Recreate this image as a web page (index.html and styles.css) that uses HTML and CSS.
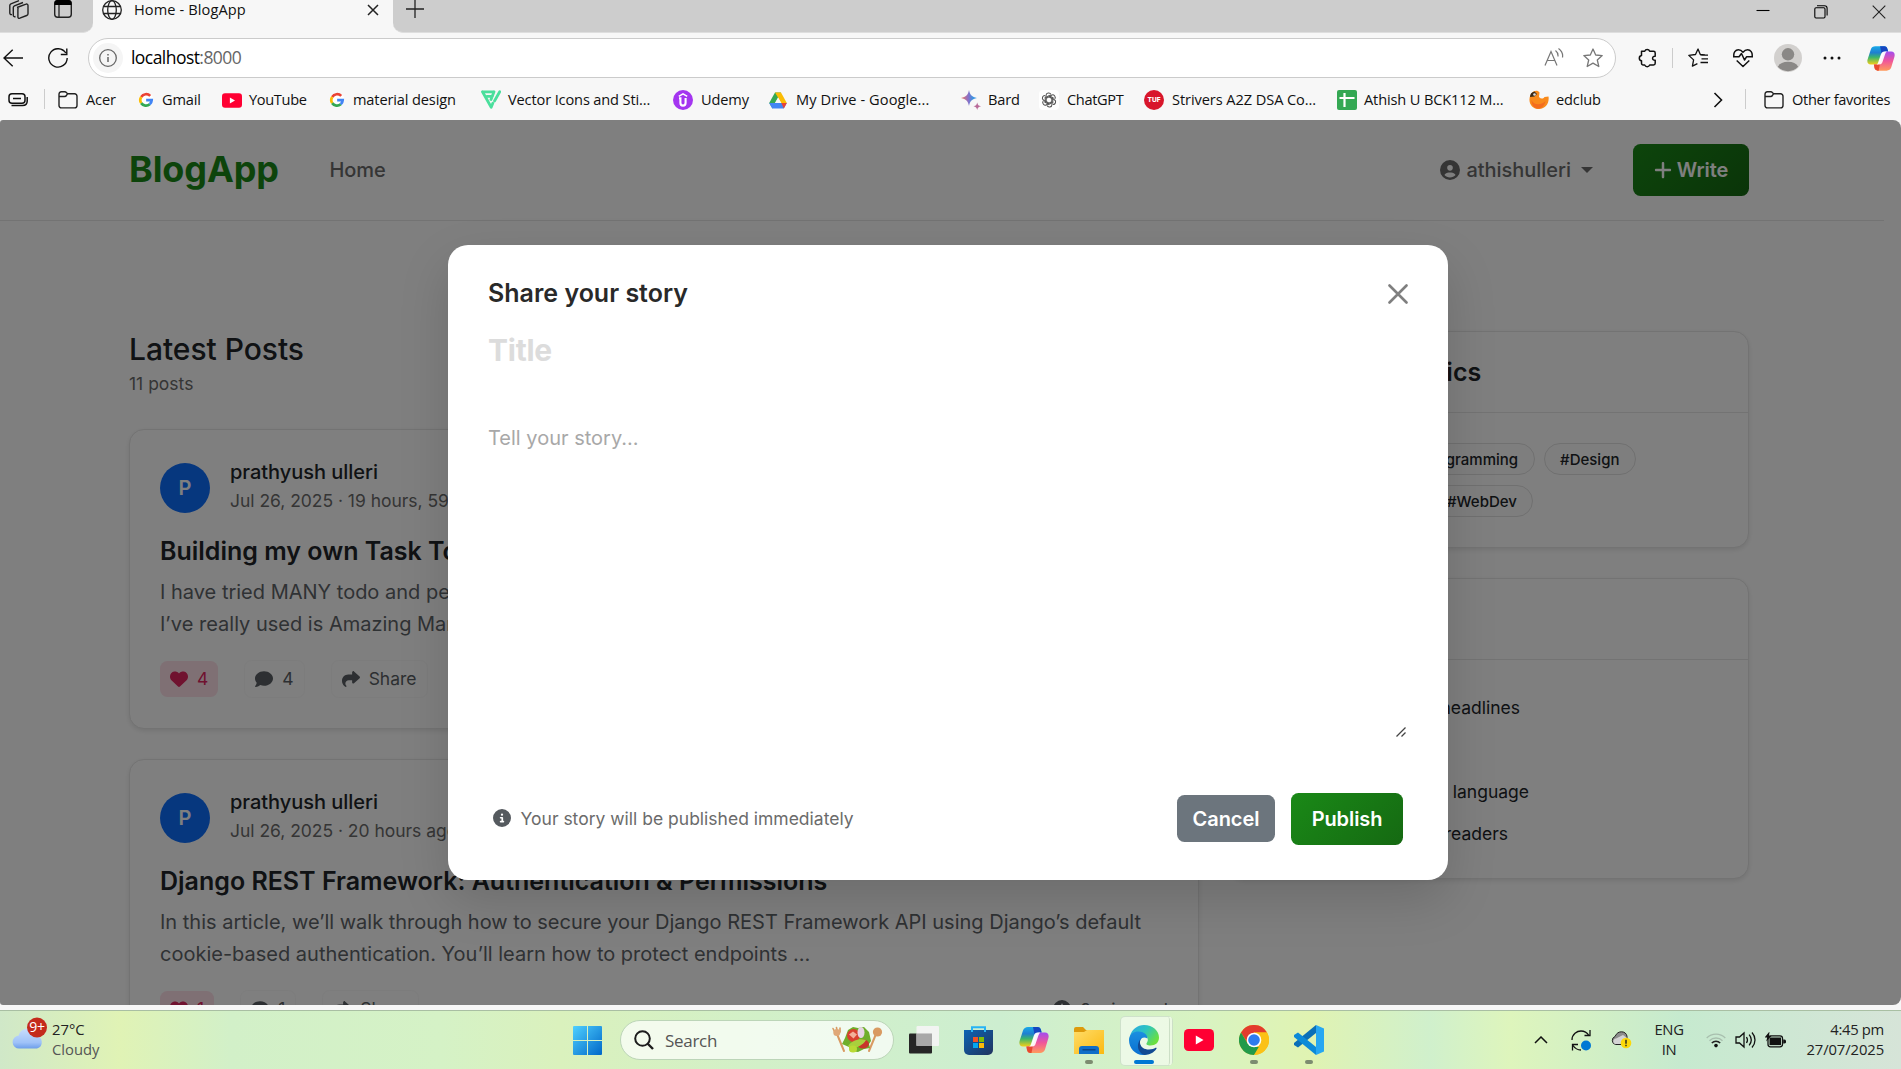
FILE: index.html
```html
<!DOCTYPE html>
<html lang="en">
<head>
<meta charset="utf-8">
<title>Home - BlogApp</title>
<link rel="stylesheet" href="styles.css">
</head>
<body>
<svg class="defs" aria-hidden="true">
  <defs>
    <linearGradient id="cpA" x1="0" y1="0" x2="0" y2="1"><stop offset="0" stop-color="#19a9e8"/><stop offset=".35" stop-color="#1f7fd0"/><stop offset=".6" stop-color="#3bb56b"/><stop offset="1" stop-color="#f5cf17"/></linearGradient>
    <linearGradient id="cpB" x1="0" y1="0" x2="0" y2="1"><stop offset="0" stop-color="#a24cf0"/><stop offset=".5" stop-color="#f0569a"/><stop offset="1" stop-color="#ff9a5c"/></linearGradient>
    <linearGradient id="win" x1="0" y1="0" x2="1" y2="1"><stop offset="0" stop-color="#4fd0ff"/><stop offset="1" stop-color="#0067c8"/></linearGradient>
    <linearGradient id="edA" x1="0" y1="0" x2="1" y2=".6"><stop offset="0" stop-color="#2aa5e8"/><stop offset=".5" stop-color="#2cc4c0"/><stop offset="1" stop-color="#6be03e"/></linearGradient>
    <linearGradient id="edB" x1="0" y1="0" x2="0" y2="1"><stop offset="0" stop-color="#1b8fe0"/><stop offset="1" stop-color="#0a6fd0"/></linearGradient>
    <linearGradient id="bard" x1="0" y1="0" x2="1" y2="0"><stop offset="0" stop-color="#f0745c"/><stop offset=".45" stop-color="#8a70c8"/><stop offset=".75" stop-color="#3b93e0"/><stop offset="1" stop-color="#4aa0ea"/></linearGradient>
    <linearGradient id="store" x1="0" y1="0" x2="1" y2="1"><stop offset="0" stop-color="#0c63b4"/><stop offset="1" stop-color="#22345e"/></linearGradient>
    <linearGradient id="fold" x1="0" y1="0" x2="1" y2="1"><stop offset="0" stop-color="#ffdc68"/><stop offset="1" stop-color="#fbb911"/></linearGradient>
    <linearGradient id="cloudG" x1="0" y1="0" x2="0" y2="1"><stop offset="0" stop-color="#c9defc"/><stop offset=".7" stop-color="#9fc2f8"/><stop offset="1" stop-color="#6d9eea"/></linearGradient>
  </defs>
  <symbol id="google" viewBox="0 0 20 20"><circle cx="10" cy="10" r="9.3" fill="#fff"/><g fill="none" stroke-width="3.4"><path d="M4 6.200A7.200 7.200 0 0 1 15.300 4.900" stroke="#ea4335"/><path d="M4 6.200A7.200 7.200 0 0 0 4 13.900" stroke="#fbbc04"/><path d="M4 13.900A7.200 7.200 0 0 0 14.700 15.300" stroke="#34a853"/><path d="M14.700 15.300A7.200 7.200 0 0 0 17.100 10.200H10.200" stroke="#4285f4"/></g></symbol>
  <symbol id="youtube" viewBox="0 0 30 22"><rect width="30" height="22" rx="4.5" fill="#ff0033"/><path d="M11.8 6.6 19.5 11l-7.7 4.4z" fill="#fff"/></symbol>
  <symbol id="folder" viewBox="0 0 20 20"><path d="M1 4.4C1 2.800 1.900 1.700 3.400 1.700h3.400c.8 0 1.200.3 1.700.9l1 1.200H16.600A2.400 2.400 0 0 1 19 6.200v9.300a2.400 2.400 0 0 1-2.400 2.400H3.400A2.400 2.400 0 0 1 1 15.500z M1 6.500h5.500c1.300 0 2-.5 3-2.600" fill="none" stroke="#222" stroke-width="1.4"/></symbol>
  <symbol id="copilot" viewBox="0 0 30 28"><path d="M9 1h9.500c2 0 3 1.200 3.500 3l.6 2.500h-3c-2 0-3.200 1-3.900 3L12.500 19c-.5 1-1.500 1.500-3 1.500H4C1 20.500-.2 18 .6 15L4 4.500C4.800 2.200 6.500 1 9 1z" fill="url(#cpA)"/><path d="M14 1h4.500c2 0 3 1.200 3.500 3l.6 2.500h-3c-2 0-3 .8-3.900 3z" fill="#1545c0"/><path d="M21 27h-9.500c-2 0-3-1.200-3.500-3l-.6-3.500h3c2 0 3.200-1 3.900-3L17.500 9c.5-1.500 1.500-2.500 3-2.500H26c3 0 4.200 2.500 3.400 5.500L26 23.500c-.8 2.300-2.500 3.500-5 3.500z" fill="url(#cpB)"/><path d="M7.400 20.500h3c2 0 3.200-1 3.900-3L12.500 27h-1c-2 0-3-1.200-3.500-3z" fill="#e8492f"/><path d="M14.500 10.500 12 18c-.5 1.500-1 2-1.800 2.500h3c2 0 2.800-1 3.400-2.700l2.700-8c.4-1.300 1-2.500 2-3.300h-2.500c-2.500 0-3.500 1.500-4.300 4z" fill="#fff" opacity=".92"/></symbol>
  <symbol id="heart" viewBox="0 0 512 512"><path d="M47.600 300.400L228.300 469.100c7.500 7 17.400 10.900 27.700 10.900s20.200-3.900 27.700-10.900L464.400 300.400c30.400-28.300 47.600-68 47.600-109.500v-5.800c0-69.900-50.500-129.500-119.400-141C347 36.500 300.600 51.400 268 84L256 96 244 84c-32.600-32.600-79-47.500-124.600-39.900C50.500 55.600 0 115.200 0 185.100v5.800c0 41.500 17.200 81.200 47.600 109.500z"/></symbol>
  <symbol id="comment" viewBox="0 0 512 512"><path d="M512 240c0 114.900-114.600 208-256 208c-37.100 0-72.300-6.400-104.100-17.900c-11.900 8.700-31.300 20.600-54.300 30.600C73.600 471.100 44.700 480 16 480c-6.500 0-12.300-3.900-14.800-9.900c-2.500-6-1.100-12.800 3.400-17.400l.3-.3c.3-.3 .7-.7 1.300-1.400c1.100-1.200 2.800-3.100 4.900-5.700c4.100-5 9.600-12.400 15.200-21.600c10-16.600 19.500-38.400 21.400-62.900C17.700 326.800 0 285.100 0 240C0 125.100 114.600 32 256 32s256 93.100 256 208z"/></symbol>
  <symbol id="share" viewBox="0 0 512 512"><path d="M307 34.800c-11.500 5.100-19 16.600-19 29.200v64H176C78.800 128 0 206.800 0 304C0 417.300 81.500 467.900 100.200 478.100c2.500 1.400 5.300 1.900 8.100 1.900c10.900 0 19.700-8.900 19.700-19.700c0-7.500-4.300-14.400-9.800-19.500C108.800 431.900 96 414.400 96 384c0-53 43-96 96-96h96v64c0 12.600 7.400 24.100 19 29.200s25 3 34.400-5.400l160-144c6.700-6.100 10.600-14.700 10.600-23.800s-3.800-17.700-10.600-23.800l-160-144c-9.400-8.500-22.900-10.600-34.400-5.400z"/></symbol>
  <symbol id="user" viewBox="0 0 512 512"><path d="M399 384.200C376.900 345.800 335.400 320 288 320H224c-47.400 0-88.900 25.800-111 64.200c35.200 39.200 86.200 63.800 143 63.800s107.800-24.700 143-63.800zM0 256a256 256 0 1 1 512 0A256 256 0 1 1 0 256zm256 16a72 72 0 1 0 0-144 72 72 0 1 0 0 144z"/></symbol>
  <symbol id="info" viewBox="0 0 512 512"><path d="M256 512A256 256 0 1 0 256 0a256 256 0 1 0 0 512zM216 336h24V272H216c-13.300 0-24-10.700-24-24s10.700-24 24-24h48c13.300 0 24 10.700 24 24v88h8c13.300 0 24 10.700 24 24s-10.700 24-24 24H216c-13.300 0-24-10.700-24-24s10.700-24 24-24zm40-208a32 32 0 1 1 0 64 32 32 0 1 1 0-64z"/></symbol>
  <symbol id="clock" viewBox="0 0 512 512"><path d="M256 0a256 256 0 1 1 0 512A256 256 0 1 1 256 0zM232 120V256c0 8 4 15.500 10.700 20l96 64c11 7.400 25.900 4.400 33.300-6.700s4.400-25.900-6.700-33.300L280 243.200V120c0-13.300-10.700-24-24-24s-24 10.700-24 24z"/></symbol>
  <symbol id="plus" viewBox="0 0 448 512"><path d="M256 80c0-17.700-14.300-32-32-32s-32 14.300-32 32V224H48c-17.700 0-32 14.300-32 32s14.300 32 32 32H192V432c0 17.700 14.300 32 32 32s32-14.300 32-32V288H400c17.700 0 32-14.300 32-32s-14.300-32-32-32H256V80z"/></symbol>
</svg>

<header class="browser">
  <div class="tabstrip">
    <div class="tabs-left">
      <svg class="i-work" width="22" height="22" viewBox="0 0 22 22" fill="none" stroke="#222" stroke-width="1.4" stroke-linejoin="round"><path d="M9 8.500l9-3.300c1-.4 2 .1 2 1.300v8.200c0 .9-.4 1.500-1.300 1.800l-6.900 2.700c-1.100.4-1.900 0-1.900-1.200V9.900c0-.8.300-1.200 1-1.500"/><path d="M7.500 17.500c-1.400.5-2.200-.1-2.200-1.300V8.500c0-.8.400-1.300 1.100-1.600L15 3.500M4 15.500c-1.400.3-2.200-.3-2.200-1.500V6.500c0-.8.400-1.300 1.100-1.600L11 1.700"/></svg>
      <svg class="i-vert" width="20" height="20" viewBox="0 0 20 20"><rect x="1.700" y="1.700" width="16.600" height="16.600" rx="3" fill="none" stroke="#222" stroke-width="1.400"/><path d="M1.500 6V4A3 3 0 0 1 4.500 1h11a3 3 0 0 1 3 3v2z" fill="#000"/><path d="M6 6v12" stroke="#222" stroke-width="1.300"/></svg>
    </div>
    <div class="tab">
      <svg width="20" height="20" viewBox="0 0 20 20" fill="none" stroke="#222" stroke-width="1.300"><circle cx="10" cy="10" r="9.300"/><ellipse cx="10" cy="10" rx="4.300" ry="9.300"/><path d="M1.500 6.500h17M1.500 13.500h17"/></svg>
      <span class="tab-title">Home - BlogApp</span>
      <svg width="12" height="12" viewBox="0 0 12 12" stroke="#222" stroke-width="1.500"><path d="M1 1l10 10M11 1L1 11"/></svg>
    </div>
    <div class="tabs-right">
      <svg width="18" height="18" viewBox="0 0 18 18" stroke="#222" stroke-width="1.300"><path d="M9 0v18M0 9h18"/></svg>
      <div class="win-buttons">
        <svg width="14" height="14" viewBox="0 0 14 14" stroke="#000" stroke-width="1.100"><path d="M.5 5.500h13"/></svg>
        <svg width="14" height="14" viewBox="0 0 14 14" fill="none" stroke="#000" stroke-width="1.100"><rect x=".8" y="2.800" width="10.200" height="10.200" rx="1.200"/><path d="M3 .7h7.500a2.600 2.600 0 0 1 2.600 2.600v7.200"/></svg>
        <svg width="14" height="14" viewBox="0 0 14 14" stroke="#222" stroke-width="1.100"><path d="M.7.700l12.600 12.600M13.300.700L.7 13.300"/></svg>
      </div>
    </div>
  </div>

  <div class="toolbar">
    <svg width="20" height="18" viewBox="0 0 20 18" fill="none" stroke="#111" stroke-width="1.400"><path d="M20 9H1M9.700.7L1 9l8.700 8.300"/></svg>
    <svg width="20" height="20" viewBox="0 0 20 20" fill="none" stroke="#111" stroke-width="1.400"><path d="M17.800 5A9.200 9.200 0 1 0 19.200 10M18.800.5v6h-6"/></svg>
    <div class="address">
      <span class="site-info"><svg width="18" height="18" viewBox="0 0 18 18" fill="none" stroke="#666" stroke-width="1.300"><circle cx="9" cy="9" r="8.300"/><path d="M9 8v5M9 5v1.600" stroke-width="1.500"/></svg></span>
      <span class="url">localhost<span class="port">:8000</span></span>
      <svg class="i-read" width="20" height="20" viewBox="0 0 20 20" fill="none" stroke="#777" stroke-width="1.200"><path d="M1 17.500L7 3.500l6 14M3 12.500h8M11.500 2.500c2 1.600 2.700 3.700 2.500 6M14.500.5c3.300 2.400 4.600 5.500 4 9"/></svg>
      <svg width="20" height="20" viewBox="0 0 20 20" fill="none" stroke="#777" stroke-width="1.300" stroke-linejoin="round"><path d="M10 1l2.700 6 6.500.6-4.900 4.400 1.500 6.500-5.800-3.400-5.800 3.400L5.700 12 .8 7.600 7.300 7z"/></svg>
    </div>
    <div class="tools">
      <svg width="20" height="20" viewBox="0 0 20 20" fill="none" stroke="#111" stroke-width="1.500" stroke-linejoin="round"><path d="M4.500 3.300h3.200a2.700 2.700 0 0 1 5 0h3.800a1.700 1.700 0 0 1 1.700 1.700v3.200c-3.500-.4-3.500 4.400 0 4v3.100a1.700 1.700 0 0 1-1.700 1.700h-3.800a2.700 2.700 0 0 1-5 0H6.200a1.700 1.700 0 0 1-1.700-1.700v-2.500a2.700 2.700 0 0 1 0-5.300z"/></svg>
      <span class="sep"></span>
      <svg width="20" height="20" viewBox="0 0 20 20" fill="none" stroke="#111" stroke-width="1.300" stroke-linejoin="round"><path d="M17 7l-4.700-.5L10 1 7.500 6.500.8 7.400l4.800 4.500-1.200 6.300 5-2.600M12.500 7.200H20M13.500 10.800H20M12.500 14.500H20"/></svg>
      <svg width="20" height="20" viewBox="0 0 20 20" fill="none" stroke="#111" stroke-width="1.500" stroke-linejoin="round"><path d="M.9 8.500C.2 4.500 2.500 1.700 5.400 1.700c2 0 3.300.9 4.600 2.500 1.300-1.600 2.600-2.500 4.600-2.500 2.900 0 5.200 2.800 4.500 6.800M0 8.800h6l2.500-3.300 3 6.500 2-3.200H20M3.700 12.500L10 18.500l6.300-6"/></svg>
      <svg width="28" height="28" viewBox="0 0 28 28"><circle cx="14" cy="14" r="14" fill="#d2d0ce"/><circle cx="14" cy="10.300" r="6.200" fill="#8a8886"/><path d="M3.800 22.800a11 8 0 0 1 20.400 0A14 14 0 0 1 3.800 22.800z" fill="#8a8886"/></svg>
      <svg width="18" height="4" viewBox="0 0 18 4" fill="#111"><circle cx="2" cy="2" r="1.500"/><circle cx="9" cy="2" r="1.500"/><circle cx="16" cy="2" r="1.500"/></svg>
      <svg width="28" height="27"><use href="#copilot"/></svg>
    </div>
  </div>

  <nav class="bookmarks">
    <a><svg width="20" height="16" viewBox="0 0 20 16" fill="none" stroke="#111" stroke-width="1.500"><rect x="1" y="1.700" width="16" height="9.600" rx="3"/><path d="M5 6.500h8M3.500 13.500h11c3 0 4.700-1.600 4.700-4.500V5"/></svg></a>
    <a class="acer"><svg width="20" height="20"><use href="#folder"/></svg>Acer</a>
    <a class="wide"><svg width="16" height="16"><use href="#google"/></svg>Gmail</a>
    <a class="tight"><svg width="20" height="15"><use href="#youtube"/></svg>YouTube</a>
    <a class="wide"><svg width="16" height="16"><use href="#google"/></svg>material design</a>
    <a><svg width="20" height="20" viewBox="0 0 20 20" fill="none" stroke="#4adf9c" stroke-linecap="round" stroke-linejoin="round"><path d="M1.500 1.800H13M1.500 1.800l8.700 15.400 1.600-4M6 6.300h5.500M10 9.500l3-7.700" stroke-width="2.800"/><path d="M18.700 1.800L13.500 11" stroke-width="2.800"/></svg>Vector Icons and Sti...</a>
    <a class="wide"><svg width="20" height="20" viewBox="0 0 20 20" fill="none" stroke="#fff"><circle cx="10" cy="10" r="10" fill="#a435f0" stroke="none"/><path d="M5.800 6.300L10 3.800l4.200 2.500" stroke-width="1.500"/><path d="M6 8.300h2.500M7.400 8.500v4.300c0 3.800 5.200 3.800 5.200 0V8" stroke-width="2.100"/></svg>Udemy</a>
    <a class="drive"><svg width="18" height="17" viewBox="0 0 18 17"><path d="M6 .5h6L3.500 16.500.2 11z" fill="#34a853"/><path d="M6 .5h6l5.800 10.500h-5.500z" fill="#fbbc04"/><path d="M3.300 11h14.500l-3 5.500H3.200L.2 11z" fill="#4285f4"/><path d="M12.400 11h5.400l-3 5.500z" fill="#ea4335"/><path d="M9 5.500L12.200 11H5.900z" fill="#f7f7f7"/></svg>My Drive - Google...</a>
    <a><svg width="20" height="20" viewBox="0 0 20 20" fill="url(#bard)"><path d="M8 0c1 5 3 7 8 8-5 1-7 3-8 8-1-5-3-7-8-8 5-1 7-3 8-8z"/><path d="M16.200 12.500c.5 2.500 1.300 3.300 3.800 3.800-2.500.5-3.300 1.300-3.800 3.700-.5-2.400-1.300-3.200-3.700-3.700 2.400-.5 3.200-1.300 3.700-3.800z" fill="#b86a98"/></svg>Bard</a>
    <a class="tight wide"><svg width="20" height="20" viewBox="0 0 20 20"><rect width="20" height="20" rx="4" fill="#fff"/><g transform="translate(10 10) scale(.9)" fill="none" stroke="#555" stroke-width="1.200"><g id="petal"><path d="M-3.300-2.100V-5c0-3.200 4.300-3.700 5.500-1.200M0-3.600L4.200-1.200V3.500"/></g><use href="#petal" transform="rotate(60)"/><use href="#petal" transform="rotate(120)"/><use href="#petal" transform="rotate(180)"/><use href="#petal" transform="rotate(240)"/><use href="#petal" transform="rotate(300)"/></g></svg>ChatGPT</a>
    <a class="striver wide"><span class="tuf">TUF</span>Strivers A2Z DSA Co...</a>
    <a><svg width="20" height="20" viewBox="0 0 20 20"><rect width="20" height="20" rx="2" fill="#34a853"/><path d="M7.500 3v14M2.500 8h15" stroke="#fff" stroke-width="2.200"/></svg>Athish U BCK112 M...</a>
    <a><svg width="20" height="20" viewBox="0 0 20 20"><path d="M3 3c2-3 6-3 7.500-.5L10 7c2 2 4 2 5.500 0l4-.5c1 6-2.500 12.500-9.500 12.500C4 19 0 14.500.5 9 .6 6.500 1.500 4.500 3 3z" fill="#f98a1b"/><path d="M2.500 10c2 5 9 6 14 1-1 5-4 7.500-7.500 7.500-4 0-6.500-4-6.500-8.500z" fill="#f36c1e"/><path d="M1 7c0-3 1.500-5 4.500-5.500L8 4 5.500 6.500z" fill="#3a2a18"/><circle cx="5.500" cy="4.500" r="1.300" fill="#ddd"/></svg>edclub</a>
    <a><svg class="i-chev" width="10" height="16" viewBox="0 0 10 16" fill="none" stroke="#111" stroke-width="1.600"><path d="M1.500 1l7 7-7 7"/></svg></a>
    <a class="other"><svg width="20" height="20"><use href="#folder"/></svg>Other favorites</a>
  </nav>
</header>

<div class="viewport">
  <div class="page">
    <nav class="navbar">
      <div class="container">
        <a class="brand">BlogApp</a>
        <a class="nav-link">Home</a>
        <a class="nav-user"><svg width="20" height="20"><use href="#user"/></svg><span>athishulleri</span><i class="caret"></i></a>
        <a class="btn-green write"><svg width="18" height="20"><use href="#plus"/></svg>Write</a>
      </div>
    </nav>
    <div class="container content">
      <main class="feed">
        <h2 class="feed-title">Latest Posts</h2>
        <p class="feed-count">11 posts</p>
        <article class="card post">
          <div class="author">
            <span class="avatar">P</span>
            <div class="who"><div class="name">prathyush ulleri</div><div class="meta">Jul 26, 2025 · 19 hours, 59 minutes ago</div></div>
          </div>
          <h3 class="post-title">Building my own Task Tool</h3>
          <p class="excerpt">I have tried MANY todo and personal<br>I’ve really used is Amazing Marvin</p>
          <div class="actions">
            <span class="act like"><svg width="18" height="18"><use href="#heart"/></svg>4</span>
            <span class="act"><svg width="18" height="18"><use href="#comment"/></svg>4</span>
            <span class="act"><svg width="18" height="18"><use href="#share"/></svg>Share</span>
          </div>
        </article>
        <article class="card post">
          <div class="author">
            <span class="avatar">P</span>
            <div class="who"><div class="name">prathyush ulleri</div><div class="meta">Jul 26, 2025 · 20 hours ago</div></div>
          </div>
          <h3 class="post-title">Django REST Framework: Authentication &amp; Permissions</h3>
          <p class="excerpt">In this article, we’ll walk through how to secure your Django REST Framework API using Django’s default<br>cookie-based authentication. You’ll learn how to protect endpoints …</p>
          <div class="actions">
            <span class="act like"><svg width="18" height="18"><use href="#heart"/></svg>1</span>
            <span class="act"><svg width="18" height="18"><use href="#comment"/></svg>1</span>
            <span class="act"><svg width="18" height="18"><use href="#share"/></svg>Share</span>
            <span class="read"><svg width="18" height="18"><use href="#clock"/></svg>2 min read</span>
          </div>
        </article>
      </main>
      <aside class="side">
        <section class="card">
          <h4 class="side-head">Topics</h4>
          <div class="chips">
            <div class="chip-row first"><span class="chip prog">#Programming</span><span class="chip">#Design</span></div>
            <div class="chip-row second"><span class="chip">#WebDev</span></div>
          </div>
        </section>
        <section class="card">
          <h4 class="side-head"></h4>
          <ul class="tips">
            <li class="t1">headlines</li>
            <li class="t2"></li>
            <li class="t3">language</li>
            <li class="t4">readers</li>
          </ul>
        </section>
      </aside>
    </div>
  </div>
  <div class="backdrop">
    <div class="modal">
      <div class="modal-head"><h5>Share your story</h5><svg width="20" height="20" viewBox="0 0 20 20" stroke="#7f7f7f" stroke-width="2.600" stroke-linecap="round"><path d="M1.500 1.500l17 17M18.500 1.500l-17 17"/></svg></div>
      <div class="field-title">Title</div>
      <div class="field-body"><span>Tell your story...</span><svg width="10" height="10" viewBox="0 0 10 10" stroke="#444" stroke-width="1.300"><path d="M.5 9.500l9-9M5.500 9.500l4-4"/></svg></div>
      <div class="modal-foot">
        <svg class="i-info" width="18" height="18"><use href="#info"/></svg>
        <span class="note">Your story will be published immediately</span>
        <button class="cancel">Cancel</button>
        <button class="btn-green publish">Publish</button>
      </div>
    </div>
  </div>
</div>

<footer class="taskbar">
  <div class="weather">
    <svg width="36" height="36" viewBox="0 0 36 36"><path d="M7.500 31.500a6.500 6.500 0 0 1-.8-13C8 13.500 12 11.500 16 11.500s8 3 8.500 7.500a6.400 6.400 0 0 1 .5 12.500z" fill="url(#cloudG)"/><circle cx="25" cy="10.500" r="10" fill="#c42b1c"/></svg>
    <span class="badge">9+</span>
    <div class="w-text"><div>27°C</div><div class="w-sub">Cloudy</div></div>
  </div>
  <div class="apps">
    <span class="app"><svg width="29" height="29" viewBox="0 0 29 29" fill="url(#win)"><path d="M0 1a1 1 0 0 1 1-1h13v14H0zM15 0h13a1 1 0 0 1 1 1v13H15zM0 15h14v14H1a1 1 0 0 1-1-1zM15 15h14v13a1 1 0 0 1-1 1H15z"/></svg></span>
    <span class="search">
      <svg width="20" height="20" viewBox="0 0 20 20" fill="none" stroke="#1c1c1c" stroke-width="2"><circle cx="8.500" cy="8.500" r="7.300"/><path d="M13.500 13.500l5.500 5.500" stroke-width="2.400"/></svg>
      <span>Search</span>
      <svg class="i-salad" width="52" height="28" viewBox="0 0 52 28"><g stroke="#d99a62" stroke-linecap="round"><path d="M6 8l7 17" stroke-width="2"/><path d="M45 8l-7 17" stroke-width="2"/><path d="M2 2.500l2 4M5.500 1.500l.7 4M9 2v4" stroke-width="1.600"/></g><circle cx="5.800" cy="6.500" r="3.500" fill="#e0a878"/><circle cx="46.500" cy="6" r="4.600" fill="#d99a62"/><path d="M17 4l5-3 5 1 6-1 5 5 2 9-2 3 1 4-6 1-6 3-8-1-1-4-7-3 3-6z" fill="#6fae2a"/><ellipse cx="22.500" cy="9.500" rx="6.500" ry="6.500" fill="#d9402f"/><ellipse cx="32" cy="18" rx="6" ry="4.500" fill="#c8362a"/><ellipse cx="30" cy="6.500" rx="3.500" ry="5.500" fill="#e6d3e2"/><path d="M17 20c4-6 12-8 18-6-3 5-10 9-16 8z" fill="#a9cf3d"/><ellipse cx="22" cy="23" rx="4" ry="3.500" fill="#b9d935"/><path d="M18 8.500l4-3 4 3-3.500 4z" fill="#f2b09a"/></svg>
    </span>
    <span class="app"><svg width="30" height="28" viewBox="0 0 30 28"><rect y="7.500" width="23" height="20" rx="1" fill="#262626"/><rect x="7.500" width="22.500" height="20" rx="1" fill="#f3f3f3" opacity=".95"/><path d="M7.500 7.500H23V20H7.500z" fill="#a8a8a8"/></svg></span>
    <span class="app"><svg width="29" height="29" viewBox="0 0 29 29"><path d="M8 6V1.300h13V6" fill="none" stroke="#27b4f5" stroke-width="2"/><path d="M0 4h29v20a5 5 0 0 1-5 5H5a5 5 0 0 1-5-5z" fill="url(#store)"/><path d="M7 4h2v2H7zM20 4h2v2h-2z" fill="#27b4f5"/><path d="M9 11h5v5H9z" fill="#f35325"/><path d="M15 11h5v5h-5z" fill="#81bc06"/><path d="M9 17h5v5H9z" fill="#05a6f0"/><path d="M15 17h5v5h-5z" fill="#ffba08"/></svg></span>
    <span class="app"><svg width="30" height="28"><use href="#copilot"/></svg></span>
    <span class="app run"><svg width="30" height="27" viewBox="0 0 30 27"><path d="M0 2a2 2 0 0 1 2-2h7l3 3h16v8H0z" fill="#dd9a0c"/><path d="M0 5h10l3-2h17v24H0z" fill="url(#fold)"/><path d="M5 27v-5a3 3 0 0 1 3-3h14a3 3 0 0 1 3 3v5z" fill="#0f6ec8"/><path d="M8.500 22.800h13" stroke="#0b3f80" stroke-width="1.300"/></svg></span>
    <span class="app run active"><svg width="30" height="30" viewBox="0 0 30 30"><path d="M1 11C3 4 8.500 0 15 0c9 0 15 6 15 12.500 0 5-3.500 8-8.500 8-3.500 0-5-1.200-3.500-3 2-3 .5-7-4-8C9.500 8.500 4 9 1 13z" fill="url(#edA)"/><path d="M0 15C0 9 5 6.500 9.500 6.500c5 0 9 3 9 7-5-3-8.500 1-7.500 5.500 1 5 5 8 10 8-2 2-4 3-7 3C6 30 0 23 0 15z" fill="url(#edB)"/><path d="M13 12.500c-3.500 3-3 12 7 12 3 0 5-.8 6.500-1.700.9-.4 1.400.2.9 1C25 27.700 20.500 30 15.500 30 9 28 6 19 13 12.500z" fill="#124a93"/></svg></span>
    <span class="app"><svg width="30" height="22"><use href="#youtube"/></svg></span>
    <span class="app run"><svg width="30" height="30" viewBox="0 0 30 30"><circle cx="15" cy="15" r="15" fill="#fbbf12"/><path d="M2 7.500A15 15 0 0 1 28 7.500H15L9 18.500z" fill="#e33b2e"/><path d="M2 7.500l6.700 11 6.300 3.500h6.500L15 30A15 15 0 0 1 2 7.500z" fill="#229a4a"/><path d="M15 7.500h13A15 15 0 0 1 15 30l6.500-11z" fill="#fbc116"/><circle cx="15" cy="15" r="7.300" fill="#fff"/><circle cx="15" cy="15" r="5.800" fill="#2f7bee"/></svg></span>
    <span class="app run"><svg width="30" height="30" viewBox="0 0 30 30"><path d="M22 0l8 3.500v23L22 30z" fill="#27a7f2"/><path d="M22 0v8L4 22.500 0 20v-2z" fill="#0a6fb8"/><path d="M22 30v-8L4 7.500 0 10v2z" fill="#0c8ad8"/></svg></span>
  </div>
  <div class="tray">
    <svg width="14" height="8" viewBox="0 0 14 8" fill="none" stroke="#111" stroke-width="1.500"><path d="M1 7l6-6 6 6"/></svg>
    <svg width="21" height="21" viewBox="0 0 21 21" fill="none" stroke="#111" stroke-width="1.300"><path d="M1 10C1 4 6 1 10 1c3 0 6 1.500 8 4.500M19 0v5.500h-5.500M10 20c-3.500 0-6-1.500-8-4.500M1.500 20.500v-6H7"/><circle cx="15" cy="15.500" r="5" fill="#0078d4" stroke="none"/></svg>
    <svg width="21" height="18" viewBox="0 0 21 18"><path d="M4.500 13.500a4.200 4.200 0 0 1-.5-8C5.500 2 8 .8 10.500.8c3 0 5 1.700 5.500 4.500V13.500z" fill="#8d8d8d" stroke="#222" stroke-width="1"/><path d="M4.500 13c-3-.5-3-5 .5-5.500L12 4l4 3v6z" fill="#d4d4d4"/><circle cx="15" cy="12" r="5.300" fill="#fcd90a"/><path d="M15 8.800v4M15 13.700v1.500" stroke="#222" stroke-width="1.400"/></svg>
    <div class="lang"><div>ENG</div><div>IN</div></div>
    <svg width="20" height="16" viewBox="0 0 20 16" fill="none" stroke-width="1.300"><path d="M.7 6a13 13 0 0 1 18.600 0M3.500 8.700a9.200 9.200 0 0 1 13 0" stroke="#a8bfae"/><path d="M5.800 11a6 6 0 0 1 8.400 0" stroke="#222" stroke-width="1.500"/><circle cx="10" cy="13.600" r="1.800" fill="#111"/></svg>
    <svg width="21" height="18" viewBox="0 0 21 18" fill="none" stroke="#111" stroke-width="1.300"><path d="M1 6h3.500L9 2v14l-4.500-4H1zM11.500 6c1.300 2 1.300 4 0 6M14.200 3.700c2.600 3.300 2.600 7.300 0 10.600M17 1.500c4 4.500 4 10.500 0 15"/></svg>
    <svg width="21" height="17" viewBox="0 0 21 17"><rect x="3" y="3.800" width="14.500" height="11" rx="2.500" fill="none" stroke="#111" stroke-width="1.300"/><rect x="4.500" y="5.500" width="11.500" height="7.600" fill="#111"/><path d="M18.200 7.500h1a1.200 1.200 0 0 1 0 4h-1z" fill="#111"/><path d="M4.500-.5L-.3 5.500h2.500L1.200 9.500 6.500 4H4z" fill="#111"/></svg>
    <div class="clock"><div>4:45 pm</div><div class="date">27/07/2025</div></div>
  </div>
</footer>
</body>
</html>
```
FILE: styles.css
```css
* { box-sizing: border-box; }
html, body { height: 100%; }
body {
  margin: 0;
  overflow: hidden;
  display: flex;
  flex-direction: column;
  background: #f7f7f7;
  font-family: Inter, sans-serif;
}
svg { display: block; flex: none; }
.defs { position: absolute; width: 0; height: 0; }
h2, h3, h4, h5, p, ul { margin: 0; padding: 0; }
ul { list-style: none; }

/* Browser chrome */
.browser { flex: none; height: 120px; background: #f7f7f7; color: #111; font: 14.6px "Open Sans", sans-serif; letter-spacing: -.14px; }
.tabstrip { display: flex; height: 33px; }
.tabs-left { width: 93px; height: 33px; background: #cdcdcd; border-bottom: 1px solid #dedede; border-bottom-right-radius: 10px; display: flex; gap: 24px; padding-left: 8px; }
.i-vert { margin: -1px 0 0 -1px; }
.i-work { margin-top: -1px; }
.tab { width: 300px; display: flex; align-items: flex-start; padding-left: 9px; }
.tab-title { width: 234px; padding-left: 12px; margin-right: 3px; line-height: 19px; letter-spacing: .1px; }
.tab svg:last-child { margin-top: 4px; margin-left: 8px; }
.tabs-right { flex: 1; height: 33px; background: #cdcdcd; border-bottom: 1px solid #dedede; border-bottom-left-radius: 10px; display: flex; padding-left: 13px; justify-content: space-between; }
.win-buttons { display: flex; gap: 44px; padding: 5px 15px 0 0; }
.toolbar { height: 50px; display: flex; align-items: center; padding-left: 3px; }
.toolbar > svg + svg { margin-left: 25px; }
.address { width: 1528px; height: 40px; margin-left: 20px; border: 1px solid #cbcbcb; border-radius: 20px; background: #fff; display: flex; align-items: center; padding: 0 12px 0 4px; }
.site-info { width: 30px; height: 30px; border-radius: 50%; background: #f5f5f5; display: flex; align-items: center; justify-content: center; }
.url { flex: 1; margin-left: 8px; padding-bottom: 2px; font-size: 17.5px; letter-spacing: -.55px; color: #000; }
.port { color: #666; }
.i-read { margin-right: 19px; }
.tools { display: flex; align-items: center; margin-left: 21px; }
.tools .sep { width: 1px; height: 20px; background: #ccc; margin: 0 15px; }
.tools svg:nth-child(4) { margin-left: 25px; }
.tools svg:nth-child(5) { margin-left: 21px; }
.tools svg:nth-child(6) { margin-left: 21px; }
.tools svg:nth-child(7) { margin-left: 26px; }
.bookmarks { height: 34px; display: grid; align-items: center; padding-left: 8px; grid-template-columns: 50px 80px 84px 107px 152px 192px 96px 192px 78px 105px 193px 192px 184px 51px 137px; }
.bookmarks a { display: flex; align-items: center; gap: 7px; white-space: nowrap; padding-bottom: 2px; }
.bookmarks svg, .tuf { margin-top: 2px; }
.bookmarks .tight { letter-spacing: -.35px; }
.bookmarks .wide { gap: 8px; }
.bookmarks .striver { letter-spacing: -.08px; }
.bookmarks .drive { letter-spacing: .08px; gap: 9px; }
.acer, .other { position: relative; }
.bookmarks .acer { gap: 8px; }
.bookmarks .other { gap: 8px; letter-spacing: -.3px; }
.acer::before, .other::before { content: ""; position: absolute; left: -14px; top: 1px; width: 1px; height: 20px; background: #ccc; }
.other::before { left: -19px; }
.tuf { width: 20px; height: 20px; border-radius: 50%; background: #d8162b; color: #fff; font: 800 6.500px/20px Inter, sans-serif; text-align: center; letter-spacing: 0; }

/* Site */
.viewport { position: relative; flex: none; height: 885px; overflow: hidden; border-radius: 3px 8px 8px 3px; background: #fff; color: #212529; }
.page { width: 1884px; }
.container { width: 1620px; margin-left: 129px; display: flex; }
.navbar { height: 101px; border-bottom: 1px solid #e6e6e6; }
.navbar .container { height: 100px; align-items: center; }
.brand { font-size: 36px; font-weight: 700; color: #1a8917; letter-spacing: -.1px; width: 200.500px; padding-bottom: 2px; }
.nav-link { font-size: 20px; font-weight: 500; color: #6b6b6b; flex: 1; letter-spacing: -.05px; }
.nav-user { display: flex; align-items: center; font-size: 20px; font-weight: 500; color: #6b6b6b; fill: #6b6b6b; margin-right: 40px; }
.nav-user span { margin-left: 6px; letter-spacing: -.03px; }
.caret { border: 6px solid transparent; border-top-color: #6b6b6b; border-bottom: 0; margin-left: 10px; }
.btn-green { background: linear-gradient(135deg, #1a8917, #156912); color: #fff; fill: #fff; font-weight: 600; font-size: 20px; letter-spacing: -.1px; height: 52px; border-radius: 7.500px; display: flex; align-items: center; justify-content: center; }
.write { width: 116px; gap: 5px; }
.content { padding-top: 110px; gap: 30px; }
.feed { width: 1070px; }
.feed-title { font-size: 30px; font-weight: 500; line-height: 36px; letter-spacing: -.03px; }
.feed-count { font-size: 17.500px; line-height: 26px; margin-top: 4px; margin-bottom: 32px; color: #6b6b6b; }
.card { border: 1px solid #e6e6e6; border-radius: 15px; background: #fff; box-shadow: 0 2px 5px rgba(0,0,0,.1); }
.post { height: 300px; margin-bottom: 30px; padding: 29px 30px 0; }
.author { display: flex; align-items: center; height: 58px; gap: 20px; }
.who { padding-bottom: 5px; }
.avatar { width: 50px; height: 50px; border-radius: 50%; background: #0d6efd; color: #fff; font-size: 20px; font-weight: 600; display: flex; align-items: center; justify-content: center; }
.name { font-size: 20px; font-weight: 500; line-height: 30px; color: #212529; letter-spacing: -.03px; }
.meta { font-size: 17.500px; line-height: 27px; color: #6b6b6b; letter-spacing: -.03px; }
.post-title { font-size: 25px; font-weight: 600; line-height: 32px; margin-top: 18px; white-space: nowrap; }
.excerpt { font-size: 20px; line-height: 32px; margin-top: 9px; color: #5f6469; white-space: nowrap; }
.actions { display: flex; align-items: center; margin-top: 20px; font-size: 17.500px; color: #5a5f64; fill: #5a5f64; height: 38px; gap: 26px; }
.act { height: 38px; border: 1px solid #f9f9f9; border-radius: 7.500px; display: flex; align-items: center; gap: 9px; padding: 0 10px 1px; }
.act.like { height: 36px; border: 0; background: #ffe0e9; color: #e0245e; fill: #e0245e; }
.read { margin-left: auto; display: flex; gap: 9px; align-items: center; }
.side { width: 520px; }
.side .card { height: 217px; margin-bottom: 30px; }
.side .card:nth-child(2) { height: 301px; }
.side-head { height: 81px; border-bottom: 1px solid #e6e6e6; font-size: 25px; font-weight: 600; display: flex; align-items: center; width: 518px; padding: 0 0 1px 171px; }
.chips { padding-top: 30px; }
.chip-row { display: flex; gap: 9px; height: 32px; margin-bottom: 10px; }
.first { padding-left: 165.500px; }
.second { padding-left: 200.500px; }
.chip { border: 1px solid #e0e0e0; border-radius: 16px; background: #fcfcfc; font-size: 15px; font-weight: 500; padding: 0 15.500px; line-height: 31px; }
.tips { padding-top: 29px; font-size: 17.500px; }
.tips li { height: 41.900px; line-height: 38px; display: flex; justify-content: flex-end; width: 290px; }
.tips .t3 { width: 299px; }
.tips .t4 { width: 278px; }

/* Dialog */
.backdrop { position: absolute; inset: 0; background: rgba(0,0,0,.5); display: flex; justify-content: center; align-items: flex-start; padding: 125px 5px 0 0; }
.modal { width: 1000px; height: 635px; background: #fff; border-radius: 20px; box-shadow: 0 20px 50px rgba(0,0,0,.15); padding: 30px 40px; display: flex; flex-direction: column; }
.modal-head { display: flex; justify-content: space-between; align-items: center; height: 36px; }
.modal-head svg { margin-top: 2px; }
.modal-head h5 { font-size: 25px; font-weight: 600; color: #292929; }
.field-title { font-size: 30px; font-weight: 700; color: #dcdcdc; line-height: 36px; margin-top: 21px; letter-spacing: -.25px; }
.field-body { height: 315px; margin-top: 54px; padding: 0 2px 0 0; display: flex; justify-content: space-between; align-items: flex-end; color: #a8a8a8; font-size: 20px; line-height: 32px; }
.field-body span { align-self: flex-start; }
.modal-foot { display: flex; align-items: center; margin-top: 56px; height: 52px; padding: 0 5px; }
.i-info { fill: #555a5f; margin-bottom: 2px; }
.note { flex: 1; margin-left: 9.500px; padding-bottom: 2px; font-size: 17.500px; color: #6b6b6b; }
button { border: 0; font-family: inherit; padding: 0; }
.cancel { width: 98px; height: 47px; border-radius: 7.500px; background: #6c757d; color: #fff; font-size: 20px; font-weight: 600; margin: 0 16px 1px 0; letter-spacing: -.05px; }
.publish { width: 112px; }

/* Taskbar */
.taskbar { flex: 1; margin-top: 5px; border-top: 1px solid #a9bfa3; display: flex; color: #222; font: 14.800px "Open Sans", sans-serif; letter-spacing: -.3px;
  background: linear-gradient(90deg, #d0e8c8 0, #e0f3b5 120px, #d2f0c8 230px, #d5f2c6 440px, #daf1bd 560px, #d2f0c8 760px, #cdeed0 1000px, #d8f3c2 1200px, #e0f3b2 1310px, #d0f0cc 1430px, #def5bc 1510px, #c6eacf 1680px, #d6e4d8 1901px); }
.weather { position: relative; width: 573px; display: flex; padding: 6px 0 0 12px; }
.badge { position: absolute; left: 27px; top: 7px; width: 20px; text-align: center; color: #fff; font-size: 14px; line-height: 18px; }
.w-text { margin-left: 4px; line-height: 20px; padding-top: 2px; letter-spacing: 0; }
.w-sub { color: #555; letter-spacing: 0; }
.apps { display: grid; align-items: center; grid-template-columns: 47px 289px 55px 55px 55px 55px 55px 55px 55px 55px; height: 58px; width: 961px; }
.app { height: 58px; display: flex; align-items: center; position: relative; }
.run::after { content: ""; position: absolute; left: 11px; top: 49px; width: 8px; height: 4px; border-radius: 2px; background: #7c8c70; }
.active::before { content: ""; position: absolute; left: -9px; top: 5px; width: 48px; height: 48px; border-radius: 5px; background: rgba(255,255,255,.55); border: 1px solid rgba(160,190,160,.4); border-right: 4px double rgba(200,220,195,.9); }
.active svg { position: relative; }
.active::after { left: 5px; width: 20px; background: #0078d4; }
.search { width: 274px; height: 40px; border-radius: 20px; background: rgba(255,255,255,.7); border: 1px solid #bcd5b8; display: flex; align-items: center; padding: 0 10px 0 13px; color: #555; font-size: 17px; }
.search span { flex: 1; margin-left: 11px; }
.tray { display: flex; align-items: center; height: 58px; line-height: 20px; }
.tray svg:nth-child(2) { margin-left: 23px; }
.tray svg:nth-child(3) { margin-left: 19px; }
.lang { width: 40px; margin: 0 17px 0 17px; padding-bottom: 2px; text-align: center; }
.tray svg:nth-child(6) { margin-left: 9px; }
.tray svg:nth-child(7) { margin-left: 9px; }
.clock { width: 98px; padding-bottom: 2px; text-align: right; }
.date { letter-spacing: -.1px; }
```
